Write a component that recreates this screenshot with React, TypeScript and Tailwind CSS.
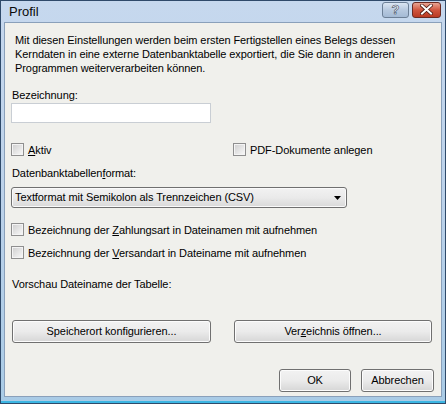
import type { ReactNode } from 'react'

const font = { fontFamily: '"Liberation Sans", Arial, sans-serif' }

function Check({ children }: { children: ReactNode }) {
  return (
    <label className="flex items-center h-[13px]">
      <span className="w-[13px] h-[13px] border border-[#8f8f8f] bg-[#f4f4f4] p-[1px] shrink-0">
        <span className="block w-full h-full bg-gradient-to-br from-[#d2d2d2] to-[#f6f6f6]" />
      </span>
      <span className="ml-[4px] leading-[14px]">{children}</span>
    </label>
  )
}

function Button({ children, className = '' }: { children: ReactNode; className?: string }) {
  return (
    <button
      type="button"
      className={`h-[23px] rounded-[3px] border border-[#707070] bg-gradient-to-b from-[#f2f2f2] via-[#ebebeb] to-[#d6d6d6] text-[11px] tracking-[-0.08px] text-black shadow-[inset_0_0_0_1px_#fcfcfc] ${className}`}
    >
      {children}
    </button>
  )
}

export default function App() {
  return (
    <div className="w-[446px] h-[404px] bg-[#2f4a6a] p-[1px]" style={font}>
      <div className="w-full h-full flex flex-col bg-gradient-to-b from-[#c6d8ee] via-[#bcd2ea] to-[#a9cbe6] px-[3px] pb-[4px] border-b-2 border-[#3cb6e3]">
        {/* title bar */}
        <div className="h-[21px] flex items-center pl-[5px] pr-[1px] shrink-0">
          <span className="text-[13px] text-[#0a0a0a] leading-none">Profil</span>
          <div className="ml-auto flex items-center gap-[3px] -mt-[4px]">
            <div className="w-[27px] h-[16px] rounded-[3px] border border-[#6c7f96] bg-gradient-to-b from-[#dbe6f3] via-[#b7c9df] to-[#a4bad5] flex items-center justify-center">
              <span
                className="text-[13px] font-bold text-white leading-none"
                style={{ WebkitTextStroke: '0.6px #3a4a60' }}
              >
                ?
              </span>
            </div>
            <div className="w-[29px] h-[16px] rounded-[3px] border border-[#6b2a22] bg-gradient-to-b from-[#e8a493] via-[#d0553e] to-[#b93a22] flex items-center justify-center">
              <svg width="13" height="11" viewBox="0 0 13 11">
                <path
                  d="M2 1.5 L11 9.5 M11 1.5 L2 9.5"
                  stroke="#4a1a12"
                  strokeWidth="3.6"
                  strokeLinecap="square"
                />
                <path d="M2 1.5 L11 9.5 M11 1.5 L2 9.5" stroke="#ffffff" strokeWidth="2" strokeLinecap="square" />
              </svg>
            </div>
          </div>
        </div>

        {/* client area */}
        <div className="flex-1 bg-[#f0f0ec] border border-[#8aa0ba] text-[11px] tracking-[-0.08px] text-black flex flex-col px-[6px]">
          <p className="mt-[10px] ml-[4px] leading-[14px]">
            Mit diesen Einstellungen werden beim ersten Fertigstellen eines Belegs dessen
            <br />
            Kerndaten in eine externe Datenbanktabelle exportiert, die Sie dann in anderen
            <br />
            Programmen weiterverarbeiten können.
          </p>

          <div className="mt-[13px] ml-[1px] leading-[14px]">Bezeichnung:</div>
          <div className="mt-[1px] w-[200px] h-[20px] bg-white border border-[#c9ced4]" />

          <div className="mt-[20px] flex">
            <div className="w-[222px]">
              <Check>
                <u>A</u>ktiv
              </Check>
            </div>
            <Check>PDF-Dokumente anlegen</Check>
          </div>

          <div className="mt-[10px] ml-[1px] leading-[14px]">
            Datenbanktabellen<u>f</u>ormat:
          </div>
          <div className="mt-[7px] w-[336px] h-[21px] rounded-[3px] border border-[#707070] bg-gradient-to-b from-[#f2f2f2] via-[#eaeaea] to-[#d9d9d9] shadow-[inset_0_0_0_1px_#fafafa] flex items-center pl-[3px] pr-[5px]">
            <span>Textformat mit Semikolon als Trennzeichen (CSV)</span>
            <svg className="ml-auto" width="7" height="4" viewBox="0 0 7 4">
              <path d="M0 0 H7 L3.5 4 Z" fill="#000" />
            </svg>
          </div>

          <div className="mt-[15px]">
            <Check>
              Bezeichnung der <u>Z</u>ahlungsart in Dateinamen mit aufnehmen
            </Check>
          </div>
          <div className="mt-[10px]">
            <Check>
              Bezeichnung der <u>V</u>ersandart in Dateiname mit aufnehmen
            </Check>
          </div>

          <div className="mt-[18px] ml-[1px] leading-[14px]">Vorschau Dateiname der Tabelle:</div>

          <div className="mt-[29px] flex gap-[23px] pl-[1px]">
            <Button className="w-[199px]">Speicherort konfigurieren...</Button>
            <Button className="w-[198px]">
              Ver<u>z</u>eichnis öffnen...
            </Button>
          </div>

          <div className="mt-[26px] flex justify-end gap-[10px] pr-[1px]">
            <Button className="w-[72px]">OK</Button>
            <Button className="w-[73px]">Abbrechen</Button>
          </div>
        </div>
      </div>
    </div>
  )
}
